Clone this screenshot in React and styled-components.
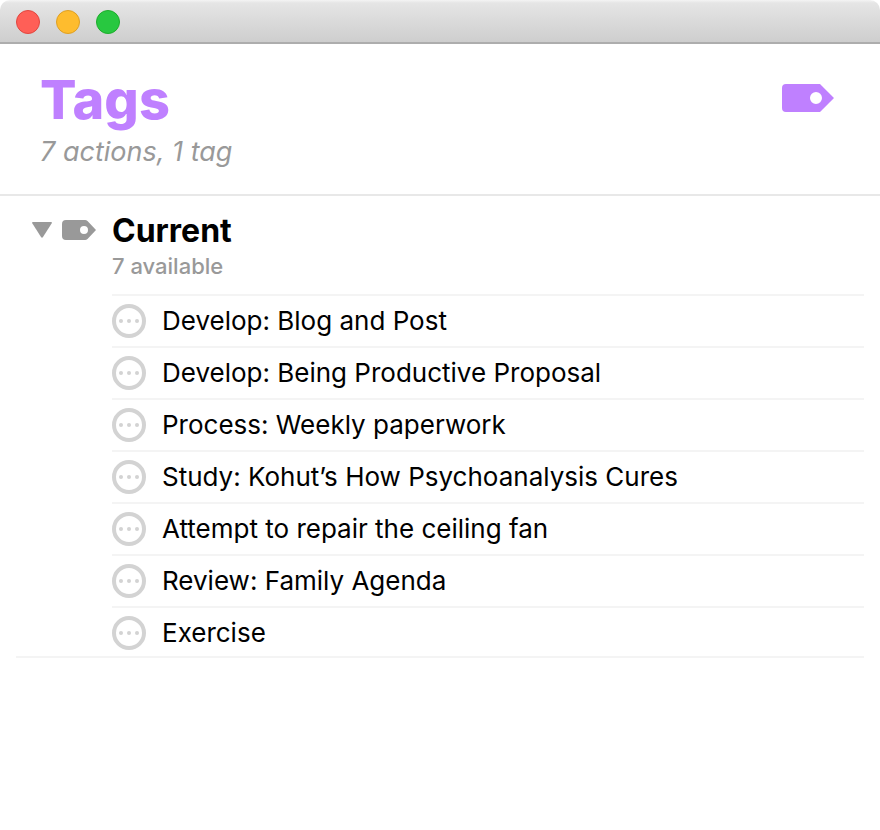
import { useState } from 'react';
import styled, { createGlobalStyle } from 'styled-components';

const GlobalStyle = createGlobalStyle`
  * {
    box-sizing: border-box;
  }

  body {
    margin: 0;
    background: #fff;
    color: #000;
    font-family: Inter, 'Liberation Sans', sans-serif;
  }
`;

const Window = styled.div`
  min-height: 100vh;
  background: #fff;
`;

const TitleBar = styled.div`
  display: flex;
  align-items: center;
  gap: 16px;
  height: 44px;
  padding: 2px 16px 0;
  border-bottom: 2px solid #adadad;
  border-radius: 10px 10px 0 0;
  background: linear-gradient(#f4f4f4 0, #e5e5e5 3px, #cecece 100%);
`;

const WindowButton = styled.button`
  width: 24px;
  height: 24px;
  padding: 0;
  border: 1px solid ${(props) => props.$border};
  border-radius: 50%;
  background: ${(props) => props.$color};
`;

const Header = styled.header`
  display: flex;
  justify-content: space-between;
  align-items: flex-start;
  padding: 24px 46px 22px 40px;
  border-bottom: 2px solid #e8e8e8;
`;

const Title = styled.h1`
  margin: 0;
  font-size: 54px;
  line-height: 64px;
  font-weight: 800;
  color: #bf80ff;
`;

const Summary = styled.p`
  margin: 0;
  font-size: 27px;
  line-height: 40px;
  font-style: italic;
  color: #999;
`;

const HeaderIcon = styled.div`
  display: flex;
  padding-top: 16px;
  color: #bf80ff;
`;

const Outline = styled.main`
  padding: 16px 16px 0;
`;

const Group = styled.section`
  border-bottom: 2px solid #f4f4f4;
`;

const GroupHeader = styled.div`
  display: flex;
  align-items: flex-start;
  padding: 0 0 12px 16px;
`;

const GroupIcons = styled.div`
  display: flex;
  flex-shrink: 0;
  align-items: center;
  gap: 10px;
  width: 80px;
  height: 36px;
  color: #999;
`;

const Disclosure = styled.button`
  display: flex;
  padding: 0;
  border: 0;
  background: none;
  color: inherit;

  svg {
    transform: ${(props) => (props.$open ? 'none' : 'rotate(-90deg)')};
  }
`;

const GroupTitle = styled.h2`
  margin: 0;
  font-size: 32px;
  line-height: 38px;
  font-weight: 700;
`;

const Available = styled.p`
  margin: 0;
  font-size: 22px;
  line-height: 32px;
  font-weight: 500;
  color: #999;
`;

const ActionList = styled.ul`
  margin: 0 0 0 96px;
  padding: 0;
  list-style: none;
`;

const ActionItem = styled.li`
  padding: 8px 0;
  border-top: 2px solid #f4f4f4;

  &:last-child {
    padding-bottom: 6px;
  }
`;

const ActionLabel = styled.label`
  display: flex;
  align-items: center;
  gap: 16px;
  font-size: 26px;
  line-height: 34px;
`;

const StatusCircle = styled.span`
  position: relative;
  display: flex;
  flex-shrink: 0;
  color: #d3d3d3;

  input {
    position: absolute;
    inset: 0;
    width: 100%;
    height: 100%;
    margin: 0;
    opacity: 0;
  }

  input:checked + svg {
    color: #bf80ff;
  }
`;

const windowButtons = [
  { label: 'Close', color: '#ff5f57', border: '#e2463f' },
  { label: 'Minimize', color: '#febc2e', border: '#dfa023' },
  { label: 'Zoom', color: '#28c840', border: '#1dad2b' },
];

const actions = [
  'Develop: Blog and Post',
  'Develop: Being Productive Proposal',
  'Process: Weekly paperwork',
  'Study: Kohut’s How Psychoanalysis Cures',
  'Attempt to repair the ceiling fan',
  'Review: Family Agenda',
  'Exercise',
];

function LargeTagIcon() {
  return (
    <svg width="52" height="28" viewBox="0 0 52 28" aria-hidden="true">
      <path
        fill="currentColor"
        fillRule="evenodd"
        d="M4 0H38L52 14L38 28H4Q0 28 0 24V4Q0 0 4 0ZM34 8A6 6 0 1 0 34 20A6 6 0 1 0 34 8Z"
      />
    </svg>
  );
}

function SmallTagIcon() {
  return (
    <svg width="34" height="20" viewBox="0 0 34 20" aria-hidden="true">
      <path
        fill="currentColor"
        fillRule="evenodd"
        d="M4 0H23Q24.500 0 25.500 1L34 10L25.500 19Q24.500 20 23 20H4Q0 20 0 16V4Q0 0 4 0ZM22 6A4 4 0 1 0 22 14A4 4 0 1 0 22 6Z"
      />
    </svg>
  );
}

function App() {
  const [open, setOpen] = useState(true);

  return (
    <>
      <GlobalStyle />
      <Window>
        <TitleBar>
          {windowButtons.map((item) => (
            <WindowButton
              key={item.label}
              type="button"
              aria-label={item.label}
              $color={item.color}
              $border={item.border}
            />
          ))}
        </TitleBar>
        <Header>
          <div>
            <Title>Tags</Title>
            <Summary>7 actions, 1 tag</Summary>
          </div>
          <HeaderIcon>
            <LargeTagIcon />
          </HeaderIcon>
        </Header>
        <Outline>
          <Group>
            <GroupHeader>
              <GroupIcons>
                <Disclosure
                  type="button"
                  aria-label="Toggle Current"
                  aria-expanded={open}
                  $open={open}
                  onClick={() => setOpen(!open)}
                >
                  <svg width="20" height="16" viewBox="0 0 20 16">
                    <path
                      fill="currentColor"
                      d="M1 0H19Q20.500 0 19.600 1.500L11 15Q10 16.500 9 15L0.400 1.500Q-0.500 0 1 0Z"
                    />
                  </svg>
                </Disclosure>
                <SmallTagIcon />
              </GroupIcons>
              <div>
                <GroupTitle>Current</GroupTitle>
                <Available>7 available</Available>
              </div>
            </GroupHeader>
            {open && (
              <ActionList>
                {actions.map((action) => (
                  <ActionItem key={action}>
                    <ActionLabel>
                      <StatusCircle>
                        <input type="checkbox" />
                        <svg width="34" height="34" viewBox="0 0 34 34">
                          <circle
                            cx="17"
                            cy="17"
                            r="15"
                            fill="none"
                            stroke="currentColor"
                            strokeWidth="4"
                          />
                          <circle cx="9" cy="17" r="2" fill="currentColor" />
                          <circle cx="17" cy="17" r="2" fill="currentColor" />
                          <circle cx="25" cy="17" r="2" fill="currentColor" />
                        </svg>
                      </StatusCircle>
                      {action}
                    </ActionLabel>
                  </ActionItem>
                ))}
              </ActionList>
            )}
          </Group>
        </Outline>
      </Window>
    </>
  );
}

export default App;
